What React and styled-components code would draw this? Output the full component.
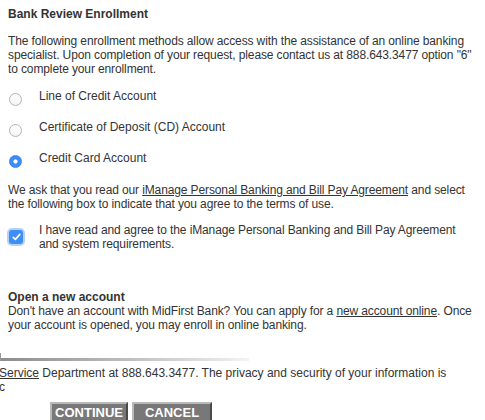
import React from 'react';
import styled, { createGlobalStyle } from 'styled-components';

const GlobalStyle = createGlobalStyle`
  html, body {
    margin: 0;
    padding: 0;
    background: #ffffff;
  }
  body {
    font-family: 'Liberation Sans', Arial, Helvetica, sans-serif;
    font-size: 12px;
    line-height: 14px;
    color: #333333;
    overflow: hidden;
  }
`;

const Screen = styled.div`
  width: 485px;
  height: 420px;
  overflow: hidden;
`;

const Panel = styled.div`
  padding: 7px 8px 0;
  white-space: nowrap;
`;

const Title = styled.h3`
  margin: ${(props) => props.$mt || '0'} 0 0;
  font-size: 12px;
  line-height: 14px;
  font-weight: bold;
  color: #333333;
`;

const Para = styled.p`
  margin: ${(props) => props.$mt || '0'} 0 0;
  line-height: 14px;
  letter-spacing: -0.12px;
`;

const Link = styled.a`
  color: #333333;
  text-decoration: underline;
  cursor: pointer;
`;

const Options = styled.div`
  display: flex;
  flex-direction: column;
  gap: 17px;
  margin-top: 13px;
`;

const OptionRow = styled.label`
  display: flex;
  align-items: flex-start;
  height: 14px;
  line-height: 14px;
`;

const Radio = styled.span`
  flex: none;
  box-sizing: border-box;
  width: 13px;
  height: 13px;
  margin: 4px 17px 0 1px;
  border-radius: 50%;
  border: 1px solid ${(props) => (props.$checked ? '#3a87f2' : '#b4b4b4')};
  background: ${(props) =>
    props.$checked
      ? 'radial-gradient(circle, #ffffff 0 1.8px, #3b8cf6 2.4px)'
      : 'linear-gradient(#ffffff, #f4f4f4)'};
`;

const CheckRow = styled.label`
  display: flex;
  align-items: center;
  margin-top: 12px;
  line-height: 14px;
  letter-spacing: -0.12px;
`;

const CheckBox = styled.span`
  flex: none;
  display: flex;
  align-items: center;
  justify-content: center;
  box-sizing: border-box;
  width: 14px;
  height: 14px;
  margin: 0 16px 0 1px;
  border-radius: 3px;
  background: #3f8ef5;
  box-shadow: 0 0 0 2px rgba(120, 170, 245, 0.55);
`;

const Footer = styled.div`
  margin-top: 21px;
`;

const Divider = styled.div`
  display: flex;
  align-items: flex-end;
  width: 248px;
  height: 8px;
  border-left: 1px solid #9a9a9a;
`;

const DividerBar = styled.div`
  flex: 1;
  height: 3px;
  background: linear-gradient(to right, #8c8c8c, #b8b8b8 45%, #e2e2e2 85%, #f4f4f4);
`;

const Notice = styled.p`
  margin: 5px 0 0 -1px;
  line-height: 14px;
  white-space: nowrap;
`;

const Buttons = styled.div`
  display: flex;
  gap: 4px;
  margin: 8px 0 0 50px;
`;

const Button = styled.button`
  box-sizing: border-box;
  width: ${(props) => props.$w};
  height: 21px;
  padding: 0;
  font-family: 'Liberation Sans', Arial, Helvetica, sans-serif;
  font-size: 13px;
  font-weight: bold;
  line-height: 17px;
  color: #ffffff;
  background: #787878;
  border: 2px solid;
  border-color: #b9b9b9 #4a4a4a #4a4a4a #b9b9b9;
  cursor: pointer;
`;

export default function App() {
  return (
    <Screen>
      <GlobalStyle />
      <Panel>
        <Title>Bank Review Enrollment</Title>
        <Para $mt="13px">
          The following enrollment methods allow access with the assistance of an online banking
          <br />
          specialist. Upon completion of your request, please contact us at 888.643.3477 option "6"
          <br />
          to complete your enrollment.
        </Para>

        <Options>
          <OptionRow>
            <Radio />
            Line of Credit Account
          </OptionRow>
          <OptionRow>
            <Radio />
            Certificate of Deposit (CD) Account
          </OptionRow>
          <OptionRow>
            <Radio $checked />
            Credit Card Account
          </OptionRow>
        </Options>

        <Para $mt="18px">
          We ask that you read our <Link>iManage Personal Banking and Bill Pay Agreement</Link> and select
          <br />
          the following box to indicate that you agree to the terms of use.
        </Para>

        <CheckRow>
          <CheckBox>
            <svg width="9" height="8" viewBox="0 0 9 8">
              <path d="M1.2 4.3 L3.4 6.4 L7.8 1.4" fill="none" stroke="#ffffff" strokeWidth="1.6" strokeLinecap="round" strokeLinejoin="round" />
            </svg>
          </CheckBox>
          <span>
            I have read and agree to the iManage Personal Banking and Bill Pay Agreement
            <br />
            and system requirements.
          </span>
        </CheckRow>

        <Title $mt="39px">Open a new account</Title>
        <Para>
          Don't have an account with MidFirst Bank? You can apply for a <Link>new account online</Link>. Once
          <br />
          your account is opened, you may enroll in online banking.
        </Para>
      </Panel>

      <Footer>
        <Divider>
          <DividerBar />
        </Divider>
        <Notice>
          <Link>Service</Link> Department at 888.643.3477. The privacy and security of your information is
          <br />c
        </Notice>
        <Buttons>
          <Button $w="78px">CONTINUE</Button>
          <Button $w="80px">CANCEL</Button>
        </Buttons>
      </Footer>
    </Screen>
  );
}
